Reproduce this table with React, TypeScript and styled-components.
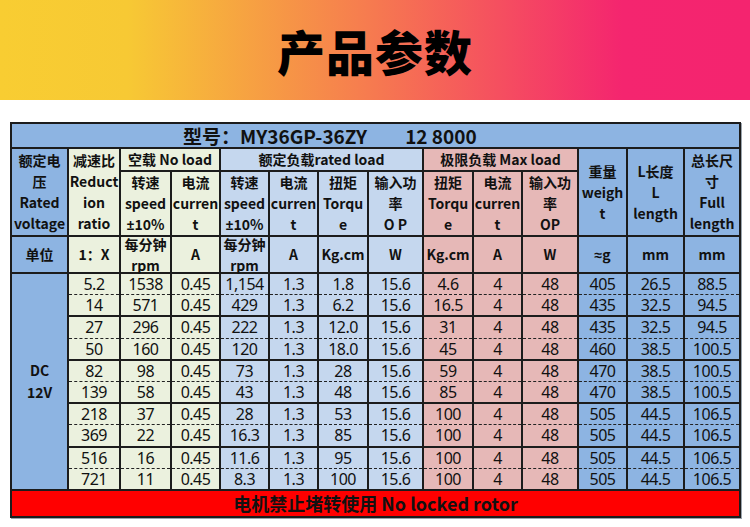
import React from "react";
import styled, { createGlobalStyle, css } from "styled-components";

const GlobalStyle = createGlobalStyle`
  html, body { margin: 0; padding: 0; background: #ffffff; }
  body { font-family: "Noto Sans", "Noto Sans CJK SC", sans-serif; }
`;

const TONES = {
  blue: "#8db4e2",
  cream: "#ebf1de",
  light: "#c5d7ee",
  pink: "#e6b8b7",
};
type Tone = keyof typeof TONES;

const Page = styled.main`
  width: 750px;
  height: 527px;
  overflow: hidden;
  display: flex;
  flex-direction: column;
`;

const Banner = styled.header`
  height: 100px;
  flex: none;
  display: flex;
  align-items: center;
  justify-content: center;
  background: linear-gradient(
    90deg,
    #f8cd32 0%,
    #f7c934 17%,
    #f67950 50%,
    #f4256f 83%,
    #f4246f 100%
  );
`;

const Title = styled.h1`
  margin: 0;
  font: 900 48px/1 "Noto Sans CJK SC", sans-serif;
  color: #000;
  letter-spacing: 1px;
`;

const TableWrap = styled.section`
  padding: 22px 0 0 10px;
`;

const Table = styled.table`
  width: 729px;
  table-layout: fixed;
  border-collapse: collapse;
  border: 2px solid #1c1c1c;
  box-shadow: 1px 1px 0 #9aa4ad;
`;

const Row = styled.tr<{ $h: number }>`
  height: ${(p) => p.$h}px;
`;

const TitleCell = styled.th`
  background: ${TONES.blue};
  border: 2px solid #1c1c1c;
  padding: 0 0 0 171px;
  text-align: left;
  vertical-align: middle;
  font: 700 19px/23px "Noto Sans CJK SC", sans-serif;
  color: #111;
  white-space: nowrap;
`;

const Spacer = styled.span`
  display: inline-block;
  width: 38px;
`;

const Head = styled.th<{ $tone: Tone }>`
  background: ${(p) => TONES[p.$tone]};
  border: 2px solid #1c1c1c;
  padding: 0;
  text-align: center;
  vertical-align: middle;
  font: 700 14px/21px "Noto Sans CJK SC", sans-serif;
  color: #111;
  white-space: nowrap;
`;

const Latin = styled.span`
  font-family: "Noto Sans", sans-serif;
`;

const Tight = styled.div`
  line-height: 20.5px;
  margin: -3px 0;
`;

const Cell = styled.td<{ $tone: Tone; $dash?: "top" | "bottom" }>`
  background: ${(p) => TONES[p.$tone]};
  border: 2px solid #1c1c1c;
  padding: 0;
  text-align: center;
  vertical-align: middle;
  font: 400 16px/1 "Noto Sans", sans-serif;
  letter-spacing: -0.5px;
  color: #111;
  white-space: nowrap;
  ${(p) =>
    p.$dash === "bottom" &&
    css`
      border-bottom: 1px dashed #222;
    `}
  ${(p) =>
    p.$dash === "top" &&
    css`
      border-top: 1px dashed #222;
    `}
`;

const VoltCell = styled.td`
  background: ${TONES.blue};
  border: 2px solid #1c1c1c;
  padding: 0;
  text-align: center;
  vertical-align: middle;
  font: 700 14px/22px "Noto Sans CJK SC", sans-serif;
  color: #111;
`;

const FootCell = styled.td`
  background: #ff0000;
  border: 2px solid #1c1c1c;
  padding: 0;
  text-align: center;
  vertical-align: middle;
  font: 700 18px/22px "Noto Sans CJK SC", sans-serif;
  color: #111;
  white-space: nowrap;
`;

const COLS = [57, 52, 51, 49, 49, 49, 50, 55, 50, 49, 56, 49, 57, 56];

const DATA_TONES: Tone[] = [
  "cream", "cream", "cream",
  "light", "light", "light", "light",
  "pink", "pink", "pink",
  "blue", "blue", "blue",
];

const ROWS: string[][] = [
  ["5.2", "1538", "0.45", "1,154", "1.3", "1.8", "15.6", "4.6", "4", "48", "405", "26.5", "88.5"],
  ["14", "571", "0.45", "429", "1.3", "6.2", "15.6", "16.5", "4", "48", "435", "32.5", "94.5"],
  ["27", "296", "0.45", "222", "1.3", "12.0", "15.6", "31", "4", "48", "435", "32.5", "94.5"],
  ["50", "160", "0.45", "120", "1.3", "18.0", "15.6", "45", "4", "48", "460", "38.5", "100.5"],
  ["82", "98", "0.45", "73", "1.3", "28", "15.6", "59", "4", "48", "470", "38.5", "100.5"],
  ["139", "58", "0.45", "43", "1.3", "48", "15.6", "85", "4", "48", "470", "38.5", "100.5"],
  ["218", "37", "0.45", "28", "1.3", "53", "15.6", "100", "4", "48", "505", "44.5", "106.5"],
  ["369", "22", "0.45", "16.3", "1.3", "85", "15.6", "100", "4", "48", "505", "44.5", "106.5"],
  ["516", "16", "0.45", "11.6", "1.3", "95", "15.6", "100", "4", "48", "505", "44.5", "106.5"],
  ["721", "11", "0.45", "8.3", "1.3", "100", "15.6", "100", "4", "48", "505", "44.5", "106.5"],
];

const SUB_HEADS: { tone: Tone; lines: string[] }[] = [
  { tone: "cream", lines: ["转速", "speed", "±10%"] },
  { tone: "cream", lines: ["电流", "curren", "t"] },
  { tone: "light", lines: ["转速", "speed", "±10%"] },
  { tone: "light", lines: ["电流", "curren", "t"] },
  { tone: "light", lines: ["扭矩", "Torqu", "e"] },
  { tone: "light", lines: ["输入功", "率", "O P"] },
  { tone: "pink", lines: ["扭矩", "Torqu", "e"] },
  { tone: "pink", lines: ["电流", "curren", "t"] },
  { tone: "pink", lines: ["输入功", "率", "OP"] },
];

const UNITS: { tone: Tone; lines: string[] }[] = [
  { tone: "blue", lines: ["单位"] },
  { tone: "cream", lines: ["1：X"] },
  { tone: "cream", lines: ["每分钟", "rpm"] },
  { tone: "cream", lines: ["A"] },
  { tone: "light", lines: ["每分钟", "rpm"] },
  { tone: "light", lines: ["A"] },
  { tone: "light", lines: ["Kg.cm"] },
  { tone: "light", lines: ["W"] },
  { tone: "pink", lines: ["Kg.cm"] },
  { tone: "pink", lines: ["A"] },
  { tone: "pink", lines: ["W"] },
  { tone: "blue", lines: ["≈g"] },
  { tone: "blue", lines: ["mm"] },
  { tone: "blue", lines: ["mm"] },
];

const Lines: React.FC<{ lines: string[] }> = ({ lines }) => (
  <>
    {lines.map((l, i) => (
      <React.Fragment key={i}>
        {i > 0 && <br />}
        {/[±≈]/.test(l) ? (
          <>
            <Latin>{l[0]}</Latin>
            {l.slice(1)}
          </>
        ) : (
          l
        )}
      </React.Fragment>
    ))}
  </>
);

export default function App() {
  return (
    <>
      <GlobalStyle />
      <Page>
        <Banner>
          <Title>产品参数</Title>
        </Banner>
        <TableWrap>
          <Table>
            <colgroup>
              {COLS.map((w, i) => (
                <col key={i} style={{ width: w }} />
              ))}
            </colgroup>
            <thead>
              <Row $h={25}>
                <TitleCell colSpan={14}>
                  型号：MY36GP-36ZY<Spacer />12 8000
                </TitleCell>
              </Row>
              <Row $h={20}>
                <Head $tone="blue" rowSpan={2}>
                  <Lines lines={["额定电", "压", "Rated", "voltage"]} />
                </Head>
                <Head $tone="cream" rowSpan={2}>
                  <Lines lines={["减速比", "Reduct", "ion", "ratio"]} />
                </Head>
                <Head $tone="cream" colSpan={2}>空载 No load</Head>
                <Head $tone="light" colSpan={4}>额定负载rated load</Head>
                <Head $tone="pink" colSpan={3}>极限负载 Max load</Head>
                <Head $tone="blue" rowSpan={2}>
                  <Lines lines={["重量", "weigh", "t"]} />
                </Head>
                <Head $tone="blue" rowSpan={2}>
                  <Lines lines={["L长度", "L", "length"]} />
                </Head>
                <Head $tone="blue" rowSpan={2}>
                  <Lines lines={["总长尺", "寸", "Full", "length"]} />
                </Head>
              </Row>
              <Row $h={65}>
                {SUB_HEADS.map((h, i) => (
                  <Head key={i} $tone={h.tone}>
                    <Lines lines={h.lines} />
                  </Head>
                ))}
              </Row>
              <Row $h={35}>
                {UNITS.map((u, i) => (
                  <Head key={i} $tone={u.tone}>
                    {u.lines.length > 1 ? (
                      <Tight>
                        <Lines lines={u.lines} />
                      </Tight>
                    ) : (
                      <Lines lines={u.lines} />
                    )}
                  </Head>
                ))}
              </Row>
            </thead>
            <tbody>
              {ROWS.map((r, ri) => (
                <Row $h={21.7} key={ri}>
                  {ri === 0 && (
                    <VoltCell rowSpan={ROWS.length}>
                      DC
                      <br />
                      12V
                    </VoltCell>
                  )}
                  {r.map((v, ci) => (
                    <Cell
                      key={ci}
                      $tone={DATA_TONES[ci]}
                      $dash={ri % 2 === 0 ? "bottom" : "top"}
                    >
                      {v}
                    </Cell>
                  ))}
                </Row>
              ))}
            </tbody>
            <tfoot>
              <Row $h={27}>
                <FootCell colSpan={14}>电机禁止堵转使用 No locked rotor</FootCell>
              </Row>
            </tfoot>
          </Table>
        </TableWrap>
      </Page>
    </>
  );
}
